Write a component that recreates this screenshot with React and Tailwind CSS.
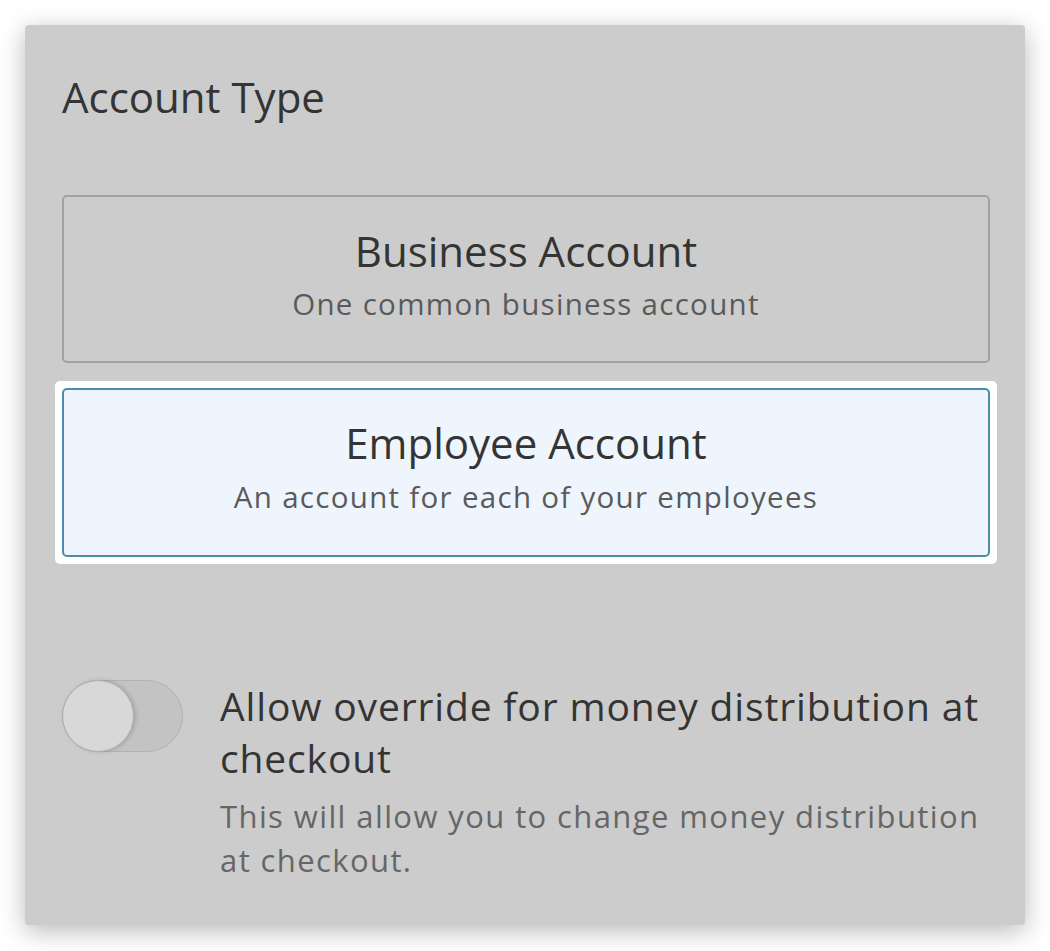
export default function App() {
  const font = { fontFamily: '"Open Sans", Lato, sans-serif' };
  return (
    <div className="w-[1050px] h-[951px] bg-white pt-[25px] pl-[25px]" style={font}>
      <div className="w-[1000px] h-[900px] bg-[#cccccc] rounded-[4px] shadow-[0_6px_26px_rgba(0,0,0,0.28)] pl-[37px] pr-[35px] pt-[46px]">
        <h1 className="text-[42px] leading-[52px] text-[#343434] font-normal">Account Type</h1>
        <div className="mt-[72px] h-[168px] border-2 border-[#a2a2a2] rounded-[5px] flex flex-col items-center pt-[30px]">
          <div className="text-[42px] leading-[48px] text-[#343434]">Business Account</div>
          <div className="text-[29.5px] leading-[40px] text-[#5a5a5a] mt-[9px] tracking-[1.3px]">One common business account</div>
        </div>
        <div className="mt-[18px] -mx-[7px] p-[7px] bg-white rounded-[5px]">
          <div className="h-[169px] border-2 border-[#4b8cad] bg-[#eef5fd] rounded-[5px] flex flex-col items-center pt-[29px]">
            <div className="text-[42px] leading-[48px] text-[#343434]">Employee Account</div>
            <div className="text-[29.5px] leading-[40px] text-[#5a5a5a] mt-[10px] tracking-[1.3px]">An account for each of your employees</div>
          </div>
        </div>
        <div className="mt-[116px] flex gap-[37px]">
          <div className="relative w-[121px] h-[72px] shrink-0 rounded-full bg-[#c3c3c3] border border-[#b2b2b2]">
            <div className="absolute -left-px -top-px w-[72px] h-[72px] rounded-full bg-[#d8d8d8] border border-[#aeaeae] shadow-[2px_0_4px_rgba(0,0,0,0.15)]"></div>
          </div>
          <div>
            <div className="text-[39px] leading-[52px] text-[#343434] tracking-[0.85px]">Allow override for money distribution at checkout</div>
            <div className="text-[31px] leading-[44.5px] text-[#666666] mt-[9.5px] tracking-[1.4px]">This will allow you to change money distribution at checkout.</div>
          </div>
        </div>
      </div>
    </div>
  );
}
